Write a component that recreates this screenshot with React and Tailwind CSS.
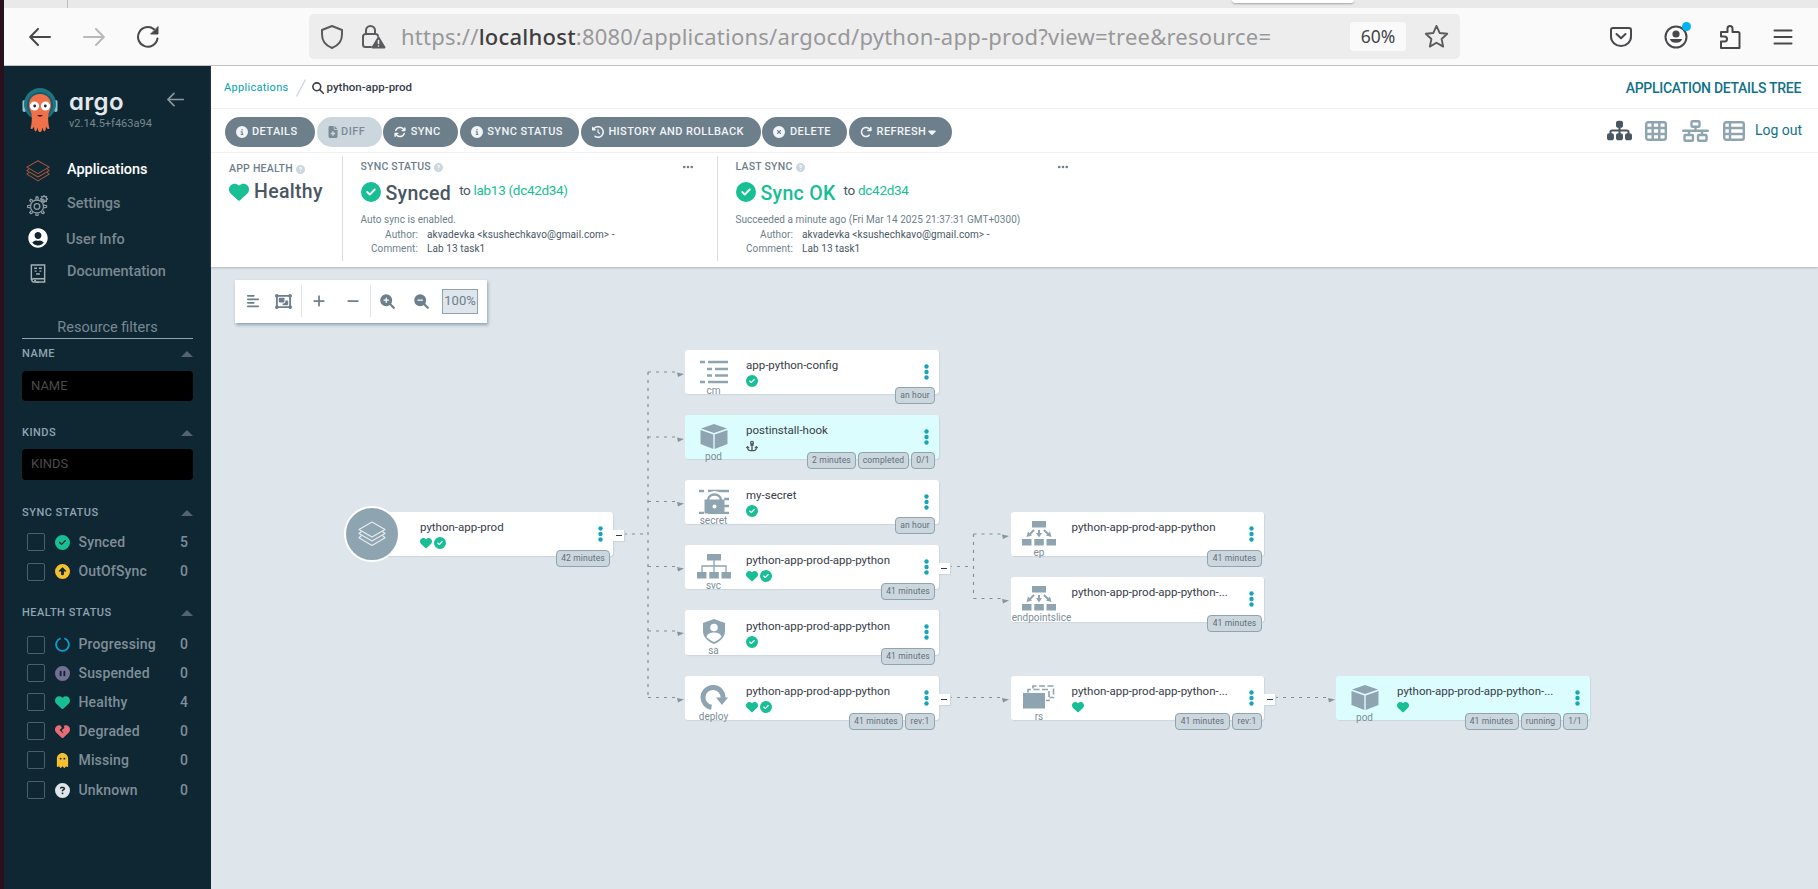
import React from "react";
import {
  FaHeart, FaCircleCheck, FaCircleInfo, FaArrowsRotate, FaClockRotateLeft, FaCircleXmark, FaArrowRotateRight,
  FaCircleQuestion, FaCirclePause, FaCircleUp, FaHeartCrack, FaGhost,
  FaAlignLeft, FaObjectGroup, FaAnchor,
  FaSitemap, FaCaretDown, FaFileMedical, FaEllipsis, FaPlus, FaMinus,
} from "react-icons/fa6";
import { FaUserCircle } from "react-icons/fa";

/* ---------- browser chrome ---------- */

const stroke = { fill: "none", stroke: "currentColor", strokeLinecap: "round", strokeLinejoin: "round" };

function Arrow({ flip, className, w = 22, sw = 2 }) {
  return (
    <svg width={w} height={w} viewBox="0 0 22 22" className={className} {...stroke} strokeWidth={sw} transform={flip ? "scale(-1 1)" : undefined}>
      <path d="M21 11H1.500M9 3 1.200 11 9 19" />
    </svg>
  );
}

function Browser() {
  return (
    <header className="shrink-0">
      <div className="flex h-2 bg-[#e9e9e9]">
        <div className="ml-[63px] h-2 w-px bg-[#bdbdbd]" />
        <div className="ml-[1164px] h-[3px] w-[122px] rounded-b bg-white shadow-[0_1px_2px_rgba(0,0,0,0.3)]" />
      </div>
      <div className="flex h-[58px] items-center border-b border-[#c4c4c4] bg-[#fafafa] text-[#48484b]">
        <Arrow className="ml-[25px]" />
        <Arrow flip className="ml-[32px] text-[#b9b9ba]" />
        <svg width="24" height="24" viewBox="0 0 24 24" className="ml-[31px]" {...stroke} strokeWidth="2">
          <path d="M21.500 13.500A9.800 9.800 0 1 1 18 4.300" />
          <path d="M22 2v7h-7z" fill="currentColor" strokeWidth="1" />
        </svg>
        <div className="ml-[149px] flex h-[45px] w-[1151px] items-center rounded-[5px] bg-[#ededed]">
          <svg width="24" height="26" viewBox="0 0 24 26" className="ml-[11px] text-[#5b5b5e]" {...stroke} strokeWidth="2">
            <path d="M12 2 22 6v4.500c0 6-3.500 11-10 13.500C5.500 21.500 2 16.500 2 10.500V6z" />
          </svg>
          <svg width="25" height="26" viewBox="0 0 25 26" className="ml-[17px] text-[#5b5b5e]" {...stroke} strokeWidth="2">
            <path d="M5 10V6.500a4.500 4.500 0 0 1 9 0V10M10 23H4.500A2.500 2.500 0 0 1 2 20.500v-8A2.500 2.500 0 0 1 4.500 10h10A2.500 2.500 0 0 1 17 12" />
            <path d="M17.500 13.500 23.500 23.500h-12z" fill="currentColor" />
            <path d="M17.500 16.500v3M17.500 22v.1" stroke="#ededed" strokeWidth="1.500" />
          </svg>
          <div className="ml-[15px] w-[935px] whitespace-nowrap font-['Noto_Sans',sans-serif] text-[22px] tracking-[0.230px] text-[#98989a]">
            https://<span className="font-medium text-[#3e3e41]">localhost</span>:8080/applications/argocd/python-app-prod?view=tree&amp;resource=
          </div>
          <div className="ml-[14px] flex h-[29px] w-[56px] items-center justify-center rounded bg-[#fafafa] font-['Noto_Sans',sans-serif] text-[17.500px] text-[#444448]">60%</div>
          <svg width="25" height="25" viewBox="0 0 24 24" className="ml-[18px] text-[#5b5b5e]" {...stroke} strokeWidth="1.800">
            <path d="M12 1.800 15 8.600l7.300.8-5.400 5 1.500 7.300L12 18l-6.400 3.700 1.500-7.300-5.400-5L9 8.600z" />
          </svg>
        </div>
        <svg width="24" height="22" viewBox="0 0 24 22" className="ml-[149px]" {...stroke} strokeWidth="2">
          <path d="M4 2h16a2 2 0 0 1 2 2v6.500a10 9.500 0 0 1-20 0V4a2 2 0 0 1 2-2z" />
          <path d="m7.500 8 4.500 4.300L16.500 8" />
        </svg>
        <div className="relative ml-[31px]">
          <svg width="24" height="24" viewBox="0 0 24 24" {...stroke} strokeWidth="2">
            <circle cx="12" cy="12" r="10.500" />
            <circle cx="12" cy="9" r="3.600" fill="currentColor" stroke="none" />
            <path d="M5.800 14h12.400a6.500 5.500 0 0 1-12.400 0z" fill="currentColor" stroke="none" />
          </svg>
          <div className="absolute -right-[3px] -top-[3px] size-[9px] rounded-full bg-[#00b3f4]" />
        </div>
        <svg width="24" height="26" viewBox="0 0 24 26" className="ml-[30px]" {...stroke} strokeWidth="2">
          <path d="M3 24v-6.500h3.500a2.500 2.500 0 0 0 0-5H3V8h6.500V4.500a2.500 2.500 0 0 1 5 0V8H20a1.500 1.500 0 0 1 1.500 1.500V24z" />
        </svg>
        <svg width="20" height="18" viewBox="0 0 20 18" className="ml-[31px]" {...stroke} strokeWidth="2">
          <path d="M1.500 2.500h17M1.500 9h17M1.500 15.500h17" />
        </svg>
      </div>
    </header>
  );
}

/* ---------- shared drawings ---------- */

function Layers({ size, className }) {
  return (
    <svg width={size} height={size} viewBox="0 0 28 26" className={className} fill="none" stroke="currentColor" strokeWidth="1.200" strokeLinejoin="round">
      <path d="M14 1 27 8.500 14 16 1 8.500z" />
      <path d="M3.500 10.500 1 12.500 14 20l13-7.500-2.500-2" />
      <path d="M3.500 14.500 1 16.700 14 24.500l13-7.800-2.500-2.200" />
    </svg>
  );
}

function ArgoLogo() {
  return (
    <svg width="36" height="46" viewBox="0 0 36 46">
      <rect x="0.500" y="13" width="3.500" height="12" rx="1.700" fill="#8fc3d6" />
      <rect x="32" y="13" width="3.500" height="12" rx="1.700" fill="#8fc3d6" />
      <circle cx="18" cy="17" r="16" fill="#1f7480" />
      <circle cx="18" cy="18" r="13" fill="#175a68" />
      <path d="M18 7C10.500 7 7 12.500 7 18c0 4 1.800 6.500 2.500 9 .6 3 .5 9-1 14.500 2 1.500 3-1 3.500-2 .3 2 0 4 1.500 5 1.500-.5 1.500-3 2-4 .5 2 .5 4.500 2.500 4.500s2-2.500 2.500-4.500c.5 1 .5 3.500 2 4 1.500-1 1.200-3 1.500-5 .5 1 1.500 3.500 3.500 2-1.500-5.500-1.600-11.500-1-14.500.7-2.500 2.500-5 2.500-9 0-5.500-3.500-11-11-11z" fill="#f0704a" />
      <circle cx="12.500" cy="19" r="4.600" fill="#fff" />
      <circle cx="23.500" cy="19" r="4.600" fill="#fff" />
      <circle cx="12.700" cy="19" r="1.400" fill="#1a2a33" />
      <circle cx="23.300" cy="19" r="1.400" fill="#1a2a33" />
      <path d="M15 28q3 3.500 6 0z" fill="#3b1a18" />
    </svg>
  );
}

function Gears() {
  const teeth = [0, 45, 90, 135, 180, 225, 270, 315];
  return (
    <svg width="22" height="22" viewBox="0 0 22 22" className="text-[#8d9aa2]" fill="none" stroke="currentColor" strokeWidth="1.300">
      <circle cx="10" cy="12.500" r="6.500" />
      <circle cx="10" cy="12.500" r="2.800" />
      {teeth.map((a) => (
        <path key={a} d="M8.700 5.500 9.200 3h1.600l.5 2.500" transform={`rotate(${a} 10 12.500)`} />
      ))}
      <circle cx="17" cy="5" r="2.600" />
      {teeth.map((a) => (
        <path key={a} d="M17 2.400V1" transform={`rotate(${a} 17 5)`} />
      ))}
    </svg>
  );
}

function Book() {
  return (
    <svg width="16" height="19" viewBox="0 0 16 20" className="text-[#a5b0b6]" fill="none" stroke="currentColor" strokeWidth="1.500">
      <path d="M1 17V1h14v14.500H3A1.800 1.800 0 0 0 3 19h12v-3.500" />
      <path d="M4 4.500h3M9 4.500h3M4.500 7.500h2M9.500 7.500h2M6 10.500h4" />
      <path d="M4 17.500h2M6 19.500h3" strokeWidth="1.800" />
    </svg>
  );
}

/* ---------- sidebar ---------- */

const syncFilters = [
  [<FaCircleCheck className="text-[#18be94]" />, "Synced", 5, "h-[30px]"],
  [<FaCircleUp className="text-[#f4c030]" />, "OutOfSync", 0, "h-[29px]"],
];
const healthFilters = [
  [<svg width="15" height="15" viewBox="0 0 16 16" fill="none" stroke="#1597cc" strokeWidth="2"><path d="M10 1.500a6.800 6.800 0 1 1-4 0" /></svg>, "Progressing", 0, "h-[29px]"],
  [<FaCirclePause className="text-[#766f94]" />, "Suspended", 0, "h-[28px]"],
  [<FaHeart className="text-[#18be94]" />, "Healthy", 4, "h-[30px]"],
  [<FaHeartCrack className="text-[#e96d76]" />, "Degraded", 0, "h-[28px]"],
  [<FaGhost className="text-[#f4c030]" />, "Missing", 0, "h-[30px]"],
  [<FaCircleQuestion className="text-[#dfe5e9]" />, "Unknown", 0, "h-[30px]"],
];

function FilterRows({ rows }) {
  return rows.map(([icon, label, count, h]) => (
    <div key={label} className={`flex items-center pl-[4.500px] pr-[5px] text-[14px] font-medium text-[#7f8e97] ${h}`}>
      <span className="size-[18px] rounded-[2px] border border-[#4b5f6b]" />
      <span className="ml-[10px] flex w-[16px] justify-center text-[15px]">{icon}</span>
      <span className="ml-[8px] flex-1 tracking-[0.150px]">{label}</span>
      <span>{count}</span>
    </div>
  ));
}

function FilterHead({ label, className }) {
  return (
    <div className={`flex h-4 items-center justify-between text-[11px] font-medium tracking-[0.500px] text-[#8fa4b1] ${className}`}>
      {label}
      <span className="h-0 w-0 border-x-[6px] border-b-[6px] border-x-transparent border-b-[#54646f]" />
    </div>
  );
}

function Sidebar() {
  return (
    <aside className="w-[207px] shrink-0 bg-[#0f2733] pl-[18px] pr-[18px]">
      <div className="flex h-[69px] items-start pt-[21px]">
        <ArgoLogo />
        <div className="ml-[11px] w-[88px]">
          <div className="h-[26px] pt-[2px] font-[Inter,Lato,sans-serif] text-[24px] font-semibold leading-[25px] tracking-[0.300px] text-[#e4e8ea] [font-feature-settings:'cv11','ss01']">argo</div>
          <div className="mt-[4px] whitespace-nowrap text-[11px] leading-[14px] text-[#78878f]">v2.14.5+f463a94</div>
        </div>
        <Arrow w={17} sw={2.200} className="ml-[10px] mt-[4px] text-[#8a979e]" />
      </div>
      <nav className="mt-[17px] text-[14.500px] font-medium tracking-[-0.030px] text-[#7a8890]">
        <div className="flex h-[36px] items-center text-white"><Layers size={24} className="ml-[4px] mr-[17px] mt-[2px] text-[#a5573d]" />Applications</div>
        <div className="flex h-[32px] items-center"><span className="ml-[5px] mr-[18px] mt-[2px]"><Gears /></span><span className="-mt-[1px]">Settings</span></div>
        <div className="flex h-[38px] items-center"><FaUserCircle className="-mt-[2px] ml-[6px] mr-[18px] size-[20px] text-white" /><span className="mt-[2px]">User Info</span></div>
        <div className="flex h-[28px] items-center"><span className="ml-[8px] mr-[21px] mt-[3px]"><Book /></span>Documentation</div>
      </nav>
      <div className="mt-[32px] flex h-[21px] items-center justify-center border-b border-[#8fa4b1] pb-[1px] text-[14.500px] text-[#778791]">Resource filters</div>
      <FilterHead label="NAME" className="mt-[7px]" />
      <div className="mt-[9px] flex h-[30px] items-center rounded bg-black pb-px pl-[9px] text-[13px] text-[#49494b]">NAME</div>
      <FilterHead label="KINDS" className="mt-[24px]" />
      <div className="mt-[8px] flex h-[31px] items-center rounded bg-black pb-px pl-[9px] text-[13px] text-[#49494b]">KINDS</div>
      <FilterHead label="SYNC STATUS" className="mt-[25px]" />
      <div className="mt-[6px]"><FilterRows rows={syncFilters} /></div>
      <FilterHead label="HEALTH STATUS" className="mt-[19px]" />
      <div className="mt-[9px]"><FilterRows rows={healthFilters} /></div>
    </aside>
  );
}

/* ---------- application header ---------- */

const actions = [
  ["DETAILS", FaCircleInfo, "w-[90.500px]"],
  ["DIFF", FaFileMedical, "w-[65px]"],
  ["SYNC", FaArrowsRotate, "w-[75px]"],
  ["SYNC STATUS", FaCircleInfo, "w-[119.500px]"],
  ["HISTORY AND ROLLBACK", FaClockRotateLeft, "w-[180px]"],
  ["DELETE", FaCircleXmark, "w-[85px]"],
  ["REFRESH", FaArrowRotateRight, "w-[103px]"],
];

function ViewIcons() {
  return (
    <div className="ml-auto flex items-center pb-[2px] text-[#8fa4b1]">
      <FaSitemap className="size-[25px] text-[#495763]" />
      <svg width="22" height="20" viewBox="0 0 22 20" className="ml-[13px]" {...stroke} strokeWidth="2.400">
        <rect x="1.200" y="1.200" width="19.600" height="17.600" rx="2" />
        <path d="M1 7h20M1 13h20M7.700 1v18M14.300 1v18" />
      </svg>
      <svg width="27" height="22" viewBox="0 0 27 22" className="ml-[15px]" {...stroke} strokeWidth="2.400">
        <rect x="9.500" y="1.200" width="8" height="5.500" rx="1" />
        <path d="M1.200 10.800h24.600M13.500 7v4M7 11v3.500M20 11v3.500" />
        <rect x="2.500" y="15" width="8.500" height="5.800" rx="1" />
        <rect x="16" y="15" width="8.500" height="5.800" rx="1" />
      </svg>
      <svg width="22" height="20" viewBox="0 0 22 20" className="ml-[14px]" {...stroke} strokeWidth="2.400">
        <rect x="1.200" y="1.200" width="19.600" height="17.600" rx="2" />
        <path d="M1 7h20M1 13h20M7 1v18" />
      </svg>
      <span className="ml-[10px] mr-[16px] w-[47px] whitespace-nowrap text-[14px] text-[#0f7289]">Log out</span>
    </div>
  );
}

function Label({ children }) {
  return (
    <div className="flex h-[14px] items-center gap-[3px] whitespace-nowrap text-[10.500px] font-medium tracking-[0.230px] text-[#6d7f8b]">
      {children}
      <FaCircleQuestion className="size-[9px] text-[#ccd6dd]" />
    </div>
  );
}

function Revision({ label, title, green, target, note, className }) {
  return (
    <section className={`border-l border-[#d9e0e5] pl-[18px] text-[#495763] ${className}`}>
      <div className="flex items-center pt-[4px]">
        <Label>{label}</Label>
        <FaEllipsis className="ml-auto mr-[23px] size-[12px] text-[#6d7f8b]" />
      </div>
      <div className="mt-[5px] flex h-[26px] items-center">
        <FaCircleCheck className="size-[20px] text-[#18be94]" />
        <span className={`ml-[5px] mt-[3px] text-[19.500px] font-medium tracking-[0.300px] ${green ? "text-[#18be94]" : ""}`}>{title}</span>
        <span className="-mt-[4px] ml-[8px] whitespace-nowrap text-[13.500px] tracking-[-0.300px]">to <span className="text-[#18be94]">{target}</span></span>
      </div>
      <div className="mt-[7px] h-[15px] whitespace-nowrap text-[10px] leading-[15px] tracking-[0.050px] text-[#6d7f8b]">{note}</div>
      <div className="mt-[1px] grid grid-cols-[57.500px_1fr] gap-x-[9px] whitespace-nowrap text-[10px] leading-[14px] tracking-[0.090px]">
        <span className="text-right text-[#6d7f8b]">Author:</span><span>akvadevka &lt;ksushechkavo@gmail.com&gt; -</span>
        <span className="text-right text-[#6d7f8b]">Comment:</span><span>Lab 13 task1</span>
      </div>
    </section>
  );
}

function AppHeader() {
  return (
    <div className="relative z-10 h-[201px] shrink-0 bg-white shadow-[0_1px_2px_rgba(120,140,150,0.500)]">
      <div className="flex h-[43px] items-center border-b border-[#eef1f3] pl-[13px] pr-[17px] pt-[2px] text-[11px]">
        <span className="tracking-[0.300px] text-[#00a2b3]">Applications</span>
        <svg width="10" height="18" viewBox="0 0 10 18" className="ml-[7px]" fill="none" stroke="#ccd6dd" strokeWidth="1.300"><path d="M9.500.5.5 17.500" /></svg>
        <svg width="12" height="12" viewBox="0 0 12 12" className="ml-[6px] text-[#363c4a]" {...stroke} strokeWidth="1.600"><circle cx="4.800" cy="4.800" r="3.900" /><path d="m7.800 7.800 3.500 3.500" /></svg>
        <span className="ml-[3px] text-[11.500px] font-medium text-[#363c4a]">python-app-prod</span>
        <span className="ml-auto text-[14px] font-medium tracking-[-0.300px] text-[#0f7289]">APPLICATION DETAILS TREE</span>
      </div>
      <div className="flex h-[44px] items-center gap-[1.600px] border-b border-[#eef1f3] pl-[13.500px] pt-[2px]">
        {actions.map(([label, Icon, w]) => (
          <button key={label} className={`flex h-[30px] shrink-0 items-center gap-[4.500px] whitespace-nowrap rounded-full pl-[11px] text-[11px] font-medium tracking-[0.400px] ${w} ${label === "DIFF" ? "bg-[#ccd6dd] text-[#7b8c98]" : "bg-[#6d7f8b] text-[#f2f5f7]"}`}>
            <Icon className={`size-[12px] shrink-0 ${label === "DIFF" ? "-mr-[2px] -ml-[1px]" : ""}`} />
            <span className="flex items-center pt-px">{label}{label === "REFRESH" && <FaCaretDown className="-mt-px size-[12px]" />}</span>
          </button>
        ))}
        <ViewIcons />
      </div>
      <div className="flex pt-[3px]">
        <section className="w-[130.500px] pl-[18px] pt-[6px] text-[#495763]">
          <Label>APP HEALTH</Label>
          <div className="mt-[3px] flex h-[26px] items-center gap-[5px]">
            <FaHeart className="size-[20px] text-[#18be94]" />
            <span className="text-[19.500px] font-medium tracking-[0.300px]">Healthy</span>
          </div>
        </section>
        <Revision className="h-[105px] w-[375px]" label="SYNC STATUS" title="Synced" target="lab13 (dc42d34)" note="Auto sync is enabled." />
        <Revision className="h-[105px] w-[375px]" green label="LAST SYNC" title="Sync OK" target="dc42d34" note="Succeeded a minute ago (Fri Mar 14 2025 21:37:31 GMT+0300)" />
      </div>
    </div>
  );
}

/* ---------- resource tree ---------- */

const kindIcons = {
  cm: <path d="M1 3h5M9 3h20M8 10h5M16 10h13M8 16.500h5M16 16.500h13M1 23h5M9 23h20" stroke="currentColor" strokeWidth="2.300" fill="none" />,
  pod: <g fill="currentColor"><path d="M15 0 28 4.500 15 9 2 4.500z" /><path d="M1.500 6 14.300 10.500V25L1.500 20z" /><path d="M28.500 6 15.700 10.500V25L28.500 20z" /></g>,
  secret: <g><path d="M0 2h5M9 2h21M0 24h5M9 24h21M24 10h6M24 17h6" stroke="currentColor" strokeWidth="2.300" /><path d="M8 12v-1a7.500 6.500 0 0 1 15 0v1" stroke="#fff" strokeWidth="5" fill="none" /><path d="M9 12v-1a6.500 5.500 0 0 1 13 0v1" stroke="currentColor" strokeWidth="2.400" fill="none" /><rect x="5.500" y="10.500" width="20" height="14" fill="currentColor" /><circle cx="15.500" cy="17.500" r="2" fill="#fff" /></g>,
  svc: <g fill="currentColor"><rect x="8" y="0" width="14" height="6.500" /><rect x="-2" y="18" width="9.500" height="6.500" /><rect x="10.300" y="18" width="9.500" height="6.500" /><rect x="22.500" y="18" width="9.500" height="6.500" /><path d="M15 6v12M3 18v-6h24v6" fill="none" stroke="currentColor" strokeWidth="1.300" /></g>,
  sa: <g><path d="M15 0 26 4v8c0 6-4.500 10.500-11 13C8.500 22.500 4 18 4 12V4z" fill="currentColor" /><circle cx="15" cy="8.500" r="3.800" fill="#fff" /><path d="M7.500 18c1-3.500 4-4.500 7.500-4.500s6.500 1 7.500 4.500c-2 2.200-4.500 3.800-7.500 5-3-1.200-5.500-2.800-7.500-5z" fill="#fff" /></g>,
  deploy: <g><path d="M12.500 22.300A10 10 0 1 1 24 13" fill="none" stroke="currentColor" strokeWidth="5" /><path d="M17 12.500h12L23 20z" fill="currentColor" /></g>,
  ep: <g fill="currentColor"><rect x="8" y="0" width="14" height="6.500" /><rect x="-2" y="18" width="9.500" height="6.500" /><rect x="10.300" y="18" width="9.500" height="6.500" /><rect x="22.500" y="18" width="9.500" height="6.500" /><path d="M10 9 5.500 13.500M15 9v4M20 9l4.500 4.500" stroke="currentColor" strokeWidth="2" fill="none" /><path d="M2.500 16 4 10.500 8 14.500zM12 12h6l-3 4.500zM27.500 16 26 10.500l-4 4z" /></g>,
  rs: <g><rect x="-1" y="8" width="22" height="15.500" fill="currentColor" /><path d="M4 7.500V4.500h21V15.500H22M9 3.500V1h20.500v11.500h-4" fill="none" stroke="currentColor" strokeWidth="1.600" strokeDasharray="6 2.500" /></g>,
};
kindIcons.endpointslice = kindIcons.ep;

const nodes = [
  { kind: "cm", title: "app-python-config", x: "left-[474px]", y: "top-[83px]", status: "c", tagPos: "top-[37px] right-[3.500px]", tags: [["an hour", "w-[40px]"]] },
  { kind: "pod", title: "postinstall-hook", x: "left-[474px]", y: "top-[148px]", status: "a", pod: true, tagPos: "top-[37px] right-[3.500px]", tags: [["2 minutes", "w-[49px]"], ["completed", "w-[51px]"], ["0/1", "w-[24px]"]] },
  { kind: "secret", title: "my-secret", x: "left-[474px]", y: "top-[213px]", status: "c", tagPos: "top-[37px] right-[3.500px]", tags: [["an hour", "w-[40px]"]] },
  { kind: "svc", title: "python-app-prod-app-python", x: "left-[474px]", y: "top-[278px]", status: "hc", tagPos: "top-[38px] right-[3.500px]", tags: [["41 minutes", "w-[54px]"]], open: true },
  { kind: "sa", title: "python-app-prod-app-python", x: "left-[474px]", y: "top-[343px]", status: "c", tall: true, tagPos: "top-[38px] right-[3.500px]", tags: [["41 minutes", "w-[54px]"]] },
  { kind: "deploy", title: "python-app-prod-app-python", x: "left-[474px]", y: "top-[409px]", status: "hc", tagPos: "top-[37px] right-[3.500px]", tags: [["41 minutes", "w-[54px]"], ["rev:1", "w-[30px]"]], open: true },
  { kind: "ep", title: "python-app-prod-app-python", x: "left-[799.500px]", y: "top-[245px]", status: "", tagPos: "top-[38px] right-[2px]", tags: [["41 minutes", "w-[55px]"]] },
  { kind: "endpointslice", title: "python-app-prod-app-python-...", x: "left-[799.500px]", y: "top-[310px]", status: "", tagPos: "top-[38px] right-[2px]", tall: true, tags: [["41 minutes", "w-[55px]"]] },
  { kind: "rs", title: "python-app-prod-app-python-...", x: "left-[799.500px]", y: "top-[409px]", status: "h", tagPos: "top-[37px] right-[2px]", tags: [["41 minutes", "w-[55px]"], ["rev:1", "w-[30px]"]], open: true },
  { kind: "pod", title: "python-app-prod-app-python-...", x: "left-[1125px]", y: "top-[409px]", status: "h", pod: true, tagPos: "top-[37px] right-[2px]", tags: [["41 minutes", "w-[54px]"], ["running", "w-[40px]"], ["1/1", "w-[25px]"]] },
];

function Kebab() {
  return (
    <svg width="5" height="16" viewBox="0 0 5 16" className="absolute right-[10px] top-[14px]" fill="#18a5b8">
      <circle cx="2.500" cy="2.500" r="2.200" /><circle cx="2.500" cy="8" r="2.200" /><circle cx="2.500" cy="13.500" r="2.200" />
    </svg>
  );
}

function Tags({ tags, pos }) {
  return (
    <div className={`absolute flex gap-[2px] ${pos}`}>
      {tags.map(([t, w]) => (
        <span key={t} className={`flex h-[17px] items-center justify-center whitespace-nowrap rounded-[4px] border border-[#8fa4b1] bg-[#ccd6dd] text-[8.500px] tracking-[0.150px] text-[#5f707c] ${w}`}>{t}</span>
      ))}
    </div>
  );
}

function Collapse() {
  return (
    <span className="absolute -right-[11px] top-[18px] flex size-[11px] items-center justify-center bg-white shadow-[1px_1px_1px_#ccd6dd]">
      <span className="h-px w-[6px] bg-[#363c4a]" />
    </span>
  );
}

function Status({ status }) {
  return (
    <div className="mt-[2px] flex h-[13px] items-center gap-[2px] text-[12px] text-[#18be94]">
      {status.includes("h") && <FaHeart />}
      {status.includes("c") && <FaCircleCheck />}
      {status.includes("a") && <FaAnchor className="text-[#495763]" />}
    </div>
  );
}

function Node({ n }) {
  return (
    <div className={`absolute flex w-[253.500px] rounded-[3px] shadow-[1px_1px_1px_#ccd6dd] ${n.tall ? "h-[45px]" : "h-[44px]"} ${n.x} ${n.y} ${n.pod ? "bg-[#dcfdfd]" : "bg-white"}`}>
      <div className="flex w-[57px] flex-col items-center pt-[9px] text-[#8fa4b1]">
        <svg width="34" height="25" viewBox="-2 0 34 25" className="shrink-0">{kindIcons[n.kind]}</svg>
        <span className={`whitespace-nowrap text-[10px] leading-[12px] text-[#7d8e99] ${n.kind === "endpointslice" ? "ml-[5px]" : ""} ${n.kind === "pod" ? "mt-[1.500px]" : "mt-[0.500px]"}`}>{n.kind}</span>
      </div>
      <div className={`ml-[4px] ${n.kind === "sa" ? "pt-[9px]" : "pt-[8px]"}`}>
        <div className="whitespace-nowrap text-[11.500px] leading-[14px] text-[#363c4a]">{n.title}</div>
        <Status status={n.status} />
      </div>
      <Kebab />
      <Tags tags={n.tags} pos={n.tagPos} />
      {n.open && <Collapse />}
    </div>
  );
}

const arrowTips = [[474, 105], [474, 170], [474, 234.500], [474, 299.500], [474, 364], [474, 430.500], [799, 267], [799, 331.500], [799, 430.500], [1125, 430.500]];

function Edges() {
  return (
    <svg width="1607" height="622" viewBox="0 0 1607 622" className="absolute left-0 top-0" fill="none">
      <g stroke="#7f929e" strokeWidth="1.200" strokeDasharray="3 5">
        <path d="M413 267h24M437 105v325M437 105h32M437 170h32M437 234.500h32M437 299.500h32M437 364h32M437 430.500h32" />
        <path d="M738 299.500h24M762.500 267v64.500M762.500 267h32M762.500 331.500h32M738 430.500h56M1064 430.500h56" />
      </g>
      {arrowTips.map(([x, y]) => (
        <path key={`${x}-${y}`} d={`M${x - 8} ${y + 0.500}l7 1.500-6 3z`} fill="#8495a0" />
      ))}
    </svg>
  );
}

function Magnifier({ plus, className }) {
  return (
    <svg width="15" height="15" viewBox="0 0 15 15" className={className} fill="none" stroke="currentColor" strokeLinecap="round">
      <circle cx="6.200" cy="6.200" r="5" strokeWidth="2" fill="#6d7f8b" />
      <path d="m10 10 3.800 3.800" strokeWidth="2.200" />
      <path d={plus ? "M4 6.200h4.400M6.200 4v4.400" : "M4 6.200h4.400"} stroke="#fff" strokeWidth="1.200" />
    </svg>
  );
}

function Tree() {
  return (
    <div className="relative flex-1 overflow-hidden bg-[#dee5eb]">
      <Edges />
      <div className="absolute left-[24px] top-[13px] flex h-[43px] w-[252px] items-center bg-white pb-px text-[#6d7f8b] shadow-[1px_2px_3px_#8fa4b1]">
        <FaAlignLeft className="ml-[11px] size-[14px]" />
        <FaObjectGroup className="ml-[15px] size-[17px]" />
        <span className="ml-[9px] h-[32px] w-px bg-[#dee5eb]" />
        <FaPlus className="ml-[10px] size-[14px]" />
        <FaMinus className="ml-[20px] size-[14px]" />
        <span className="ml-[10px] h-[32px] w-px bg-[#dee5eb]" />
        <Magnifier plus className="ml-[9px]" />
        <Magnifier className="ml-[19px]" />
        <span className="ml-[13px] flex h-[25px] w-[36px] items-center justify-center border border-[#8fa4b1] bg-[#dee5eb] text-[13px]">100%</span>
      </div>

      <div className="absolute left-[149px] top-[245px] h-[44px] w-[253px] rounded-[3px] bg-white shadow-[1px_1px_1px_#ccd6dd]">
        <div className="absolute -left-[16px] -top-[6px] flex size-[56px] items-center justify-center rounded-full border-2 border-white bg-[#8fa4b1]">
          <Layers size={28} className="text-[#e6ecf0]" />
        </div>
        <div className="ml-[60px] pt-[8px]">
          <div className="whitespace-nowrap text-[11.500px] leading-[14px] text-[#363c4a]">python-app-prod</div>
          <Status status="hc" />
        </div>
        <Kebab />
        <Tags tags={[["42 minutes", "w-[54px]"]]} pos="top-[38px] right-[3px]" />
        <Collapse />
      </div>
      {nodes.map((n, i) => <Node key={i} n={n} />)}
    </div>
  );
}

export default function App() {
  return (
    <div className="flex h-[889px] w-[1818px] overflow-hidden bg-white font-[Roboto,sans-serif]">
      <div className="w-1 shrink-0 bg-[#2a0f1d]" />
      <div className="flex min-w-0 flex-1 flex-col">
        <Browser />
        <div className="flex min-h-0 flex-1">
          <Sidebar />
          <main className="flex min-w-0 flex-1 flex-col">
            <AppHeader />
            <Tree />
          </main>
        </div>
      </div>
    </div>
  );
}
